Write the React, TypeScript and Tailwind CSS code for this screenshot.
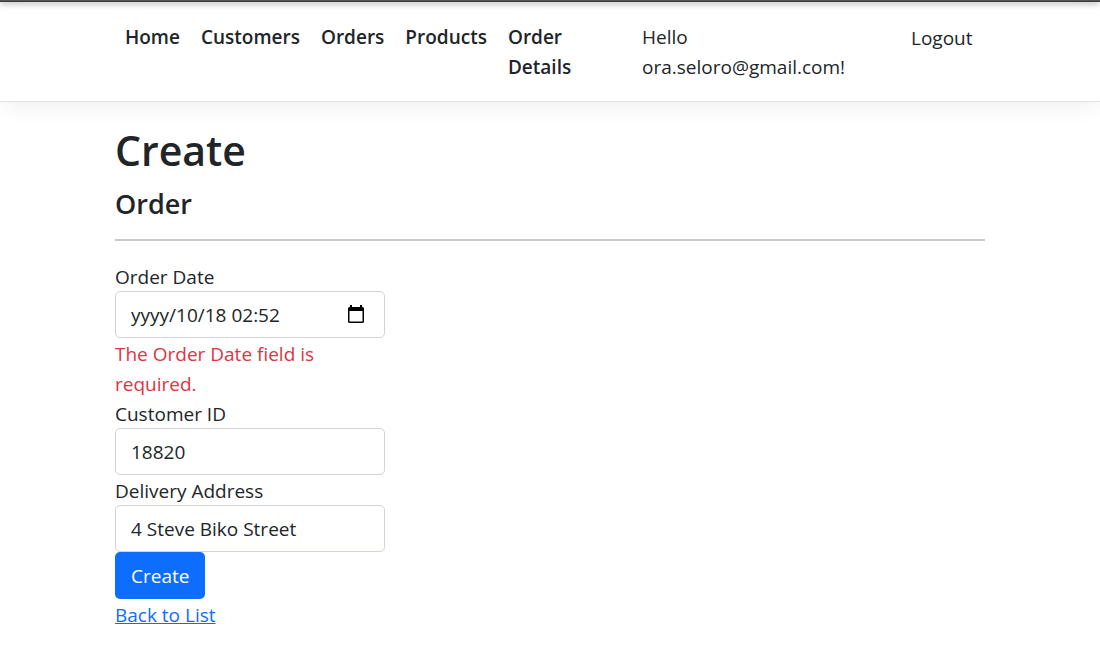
import { useState, type ReactNode } from "react";

const navLinks = ["Home", "Customers", "Orders", "Products", "Order Details"];

const inputClass =
  "block h-[47px] w-full rounded-[5px] border border-[#ced4da] bg-white px-[15px] text-[19px] text-[#212529] outline-none focus:border-[#86b7fe]";

function Field({ id, label, error, children }: { id: string; label: string; error?: string; children: ReactNode }) {
  return (
    <div>
      <label htmlFor={id} className="block h-[30px] leading-8">
        {label}
      </label>
      {children}
      {error && <p className="pt-px pr-12 -mb-px text-[#dc3545]">{error}</p>}
    </div>
  );
}

function CalendarIcon() {
  return (
    <svg viewBox="0 0 16 18" className="h-[18px] w-4" aria-hidden="true">
      <path
        fill="#000"
        d="M2 0h2v2h8V0h2v2h.5A1.5 1.5 0 0 1 16 3.500v13a1.500 1.500 0 0 1-1.500 1.500h-13A1.500 1.500 0 0 1 0 16.500v-13A1.500 1.500 0 0 1 1.500 2H2zM1.500 6v10.500h13V6z"
      />
    </svg>
  );
}

export default function App() {
  const [date, setDate] = useState("yyyy/10/18 02:52");
  const [customer, setCustomer] = useState("18820");
  const [address, setAddress] = useState("4 Steve Biko Street");

  return (
    <div className="min-h-screen bg-white font-['Open_Sans','Noto_Sans',sans-serif] text-[19px] leading-[30px] text-[#212529]">
      <div className="h-[2px] border-b border-[#3a3a3a] bg-[#555] shadow-[0_1px_6px_rgba(0,0,0,0.6)]" />
      <header className="border-b border-[#dee2e6] shadow-[0_10px_20px_-4px_rgba(0,0,0,0.06)]">
        <nav className="mx-auto grid max-w-[900px] grid-cols-[517px_1fr_84px] items-start px-[15px] pt-5 pb-[19px]">
          <ul className="flex gap-[21px] px-[10px] font-semibold">
            {navLinks.map((link) => (
              <li key={link} className="last:w-20">
                <a href="#" className="block">
                  {link}
                </a>
              </li>
            ))}
          </ul>
          <a href="#" className="w-56 pl-[10px]">
            Hello ora.seloro@gmail.com!
          </a>
          <button type="button" className="cursor-pointer pt-px pl-[10px] text-left">
            Logout
          </button>
        </nav>
      </header>

      <main className="mx-auto max-w-[900px] px-[15px] pt-[22px] pb-[18px]">
        <h1 className="text-[41px] leading-[52px] font-semibold">Create</h1>
        <h2 className="mt-[10px] text-[27px] leading-[35px] font-semibold">Order</h2>
        <hr className="mt-[18px] mb-5 border-t-2 border-[#c8c9ca]" />

        <form className="w-[270px]" onSubmit={(e) => e.preventDefault()}>
          <Field id="order-date" label="Order Date" error="The Order Date field is required.">
            <div className="relative">
              <input
                id="order-date"
                type="text"
                value={date}
                onChange={(e) => setDate(e.target.value)}
                className={inputClass}
              />
              <button
                type="button"
                aria-label="Choose date"
                className="absolute top-0 right-[21px] flex h-[45px] cursor-pointer items-center"
              >
                <CalendarIcon />
              </button>
            </div>
          </Field>
          <Field id="customer-id" label="Customer ID">
            <input
              id="customer-id"
              type="text"
              value={customer}
              onChange={(e) => setCustomer(e.target.value)}
              className={inputClass}
            />
          </Field>
          <Field id="delivery-address" label="Delivery Address">
            <input
              id="delivery-address"
              type="text"
              value={address}
              onChange={(e) => setAddress(e.target.value)}
              className={inputClass}
            />
          </Field>
          <button
            type="submit"
            className="block h-[47px] cursor-pointer rounded-[5px] bg-[#0d6efd] px-4 text-white hover:bg-[#0b5ed7]"
          >
            Create
          </button>
        </form>
        <a href="#" className="inline-block leading-8 text-[#0d6efd] underline">
          Back to List
        </a>
      </main>
    </div>
  );
}
